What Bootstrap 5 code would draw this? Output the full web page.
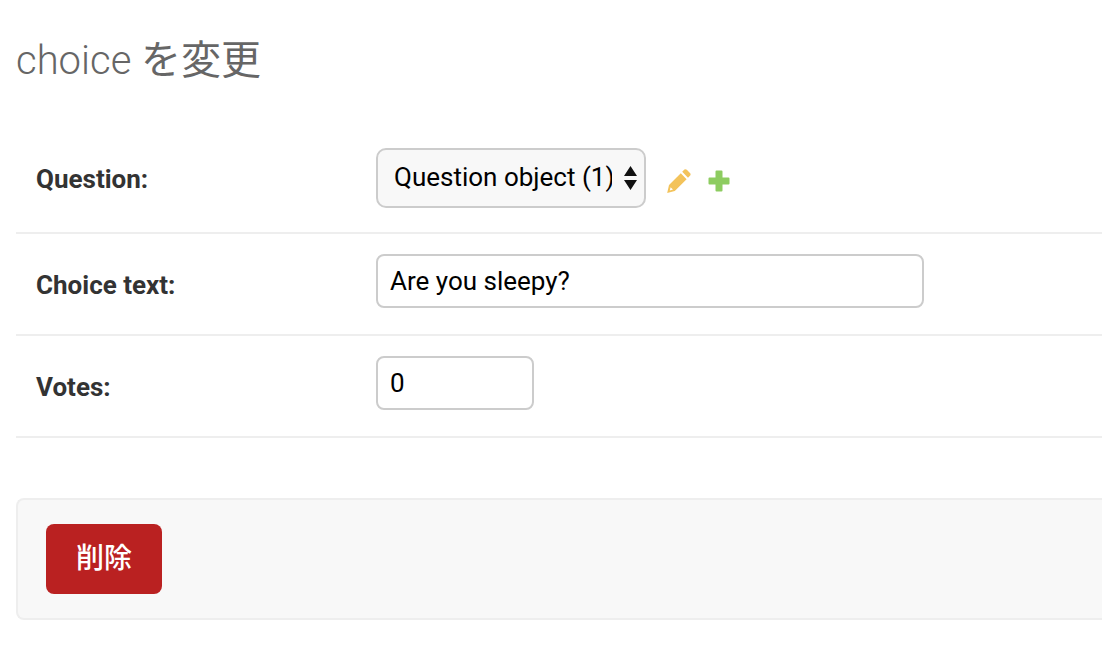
<!DOCTYPE html>
<html lang="ja">
<head>
  <meta charset="UTF-8">
  <meta name="viewport" content="width=device-width, initial-scale=1.0">
  <title>choice を変更</title>
  <link href="https://cdn.jsdelivr.net/npm/bootstrap@5.3.2/dist/css/bootstrap.min.css" rel="stylesheet">
  <style>
    body {
      font-family: Roboto, "Noto Sans CJK JP", sans-serif;
      background: #fff;
      overflow: hidden;
    }
    .page-wrap {
      padding: 34px 0 0 16px;
    }
    .page-title {
      font-size: 40px;
      font-weight: 300;
      line-height: 52px;
      color: #666;
      margin: 1px 0 41px;
    }
    .title-ja {
      font-weight: 400;
    }
    .form-line {
      border-bottom: 2px solid #eee;
      padding: 20px 0 26px 20px;
    }
    .form-line.first-line {
      padding-bottom: 24px;
    }
    .field-name {
      width: 340px;
      flex: none;
      font-size: 26px;
      font-weight: 700;
      color: #333;
      padding-top: 8px;
    }
    .first-line .field-name {
      padding-top: 2px;
    }
    .select-wrap {
      position: relative;
      width: 270px;
    }
    .field-select {
      display: block;
      width: 100%;
      height: 60px;
      font-family: inherit;
      font-size: 26px;
      color: #000;
      background-color: #f8f8f8;
      border: 2px solid #ccc;
      border-radius: 10px;
      padding: 0 32px 2px 16px;
      appearance: none;
    }
    .select-arrows {
      position: absolute;
      right: 8px;
      top: 17px;
    }
    .field-input {
      height: 54px;
      font-size: 26px;
      color: #000;
      border: 2px solid #ccc;
      border-radius: 8px;
      padding: 0 12px;
    }
    .field-input:focus {
      border-color: #ccc;
      box-shadow: none;
    }
    .input-wide { width: 548px; }
    .input-small { width: 158px; }
    .related-links {
      margin-left: 21px;
      gap: 17px;
      padding-top: 6px;
    }
    .submit-bar {
      margin-top: 60px;
      height: 122px;
      background: #f8f8f8;
      border: 2px solid #eee;
      border-right: 0;
      border-radius: 8px 0 0 8px;
      padding: 24px 28px;
    }
    .delete-btn {
      width: 116px;
      height: 70px;
      font-size: 28px;
      font-weight: 500;
      line-height: 1;
      color: #fff;
      background: #ba2121;
      border: 0;
      border-radius: 8px;
      padding: 0;
    }
    .delete-btn:hover { background: #a41515; color: #fff; }
  </style>
</head>
<body>

<div class="page-wrap">
  <h1 class="page-title">choice <span class="title-ja">を変更</span></h1>
  <form>
    <div class="form-line first-line d-flex align-items-center">
      <label class="field-name" for="question">Question:</label>
      <div class="select-wrap">
        <select class="field-select" id="question">
          <option>Question object (1)</option>
        </select>
        <svg class="select-arrows" width="15" height="26" viewBox="0 0 15 26">
          <path d="M7.5 1 L14 11 H1 Z M1 15 H14 L7.5 25 Z" fill="#111"/>
        </svg>
      </div>
      <div class="related-links d-flex align-items-center">
        <svg width="24" height="24" viewBox="0 0 24 24">
          <path fill-rule="evenodd" d="M17.4 0.6 Q18.6 -0.2 19.8 0.8 L23.2 4.2 Q24 5.4 23.2 6.6 L21 8.8 L15.2 2.8 Z M13.8 4.2 L19.6 10.2 L7.8 22 L0.2 24 L2 16 Z M3.6 18.2 L2.8 21.4 L6 20.6 Z" fill="#f3c35b"/>
        </svg>
        <svg width="22" height="22" viewBox="0 0 22 22">
          <path d="M7.5 1.5 Q7.5 0.5 8.5 0.5 H13.5 Q14.5 0.5 14.5 1.5 V7.5 H20.5 Q21.5 7.5 21.5 8.5 V13.5 Q21.5 14.5 20.5 14.5 H14.5 V20.5 Q14.5 21.5 13.5 21.5 H8.5 Q7.5 21.5 7.5 20.5 V14.5 H1.5 Q0.5 14.5 0.5 13.5 V8.5 Q0.5 7.5 1.5 7.5 H7.5 Z" fill="#8dcc60"/>
        </svg>
      </div>
    </div>
    <div class="form-line d-flex align-items-center">
      <label class="field-name" for="choiceText">Choice text:</label>
      <input class="form-control field-input input-wide" id="choiceText" type="text" value="Are you sleepy?">
    </div>
    <div class="form-line d-flex align-items-center">
      <label class="field-name" for="votes">Votes:</label>
      <input class="form-control field-input input-small" id="votes" type="text" value="0">
    </div>
    <div class="submit-bar">
      <button type="button" class="btn delete-btn">削除</button>
    </div>
  </form>
</div>

<script src="https://cdn.jsdelivr.net/npm/bootstrap@5.3.2/dist/js/bootstrap.bundle.min.js"></script>
</body>
</html>
